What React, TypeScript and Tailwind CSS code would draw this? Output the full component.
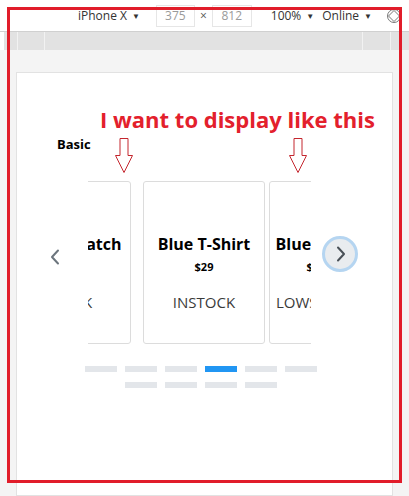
import React from "react";

const products = [
	{ name: "Bamboo Watch", price: "$65", status: "INSTOCK" },
	{ name: "Blue T-Shirt", price: "$29", status: "INSTOCK" },
	{ name: "Blue Band", price: "$79", status: "LOWSTOCK" },
];

const DownArrow = () => (
	<svg width="18" height="36" viewBox="0 0 18 36" className="shrink-0">
		<path d="M5 0.5 H13 V17.5 H17.5 L9 34.5 L0.5 17.5 H5 Z" fill="white" stroke="#c4262e" strokeWidth="1" />
	</svg>
);

const Chevron = ({ dir, color }: { dir: "left" | "right"; color: string }) => (
	<svg width="12" height="16" viewBox="0 0 12 16">
		<path
			d={dir === "left" ? "M9 1.5 L3 8 L9 14.5" : "M3 1.5 L9 8 L3 14.5"}
			fill="none"
			stroke={color}
			strokeWidth="2"
			strokeLinecap="round"
			strokeLinejoin="round"
		/>
	</svg>
);

const App = () => {
	return (
		<div className="relative w-[409px] h-[496px] overflow-hidden bg-white font-['Open_Sans',sans-serif] flex flex-col">
			{/* devtools toolbar */}
			<div className="h-8 shrink-0 flex items-center border-b border-[#d0d0d0] text-[12px] text-[#333] whitespace-nowrap">
				<span className="ml-[78px] shrink-0 flex items-center gap-[5px]">
					iPhone X <span className="text-[8px]">▼</span>
				</span>
				<span className="ml-[16px] shrink-0 w-[39px] h-[22px] border border-[#e6e6e6] flex items-center justify-center text-[#9a9a9a]">
					375
				</span>
				<span className="mx-[5px] shrink-0 text-[#555]">×</span>
				<span className="w-[40px] shrink-0 h-[22px] border border-[#e6e6e6] flex items-center justify-center text-[#9a9a9a]">
					812
				</span>
				<span className="ml-[19px] shrink-0 flex items-center gap-[5px]">
					100% <span className="text-[8px]">▼</span>
				</span>
				<span className="ml-[8px] shrink-0 flex items-center gap-[5px]">
					Online <span className="text-[8px]">▼</span>
				</span>
				<svg width="16" height="16" viewBox="0 0 16 16" className="ml-[14px] shrink-0">
					<circle cx="8" cy="8" r="6.5" fill="none" stroke="#777" strokeWidth="1" />
					<path d="M8 2.5 L13.5 8 L8 13.5 L2.5 8 Z" fill="none" stroke="#777" strokeWidth="1" />
				</svg>
			</div>

			{/* ruler */}
			<div className="h-[18px] shrink-0 ml-1 bg-[#e2e2e2] flex">
				<div className="ml-[13px] w-px bg-[#f2f2f2]" />
				<div className="ml-[26px] w-px bg-[#f2f2f2]" />
				<div className="ml-[317px] w-px bg-[#f2f2f2]" />
				<div className="ml-[27px] w-px bg-[#f2f2f2]" />
			</div>

			{/* viewport */}
			<div className="flex-1 bg-[#f4f4f4] pt-[22px] pl-4 pr-[16px]">
				<div className="h-full bg-white border border-[#e2e2e2] pt-[33px]">
					<h1 className="ml-[83px] text-[22px] leading-[27px] font-bold text-[#e3202c] whitespace-nowrap">
						I want to display like this
					</h1>

					<div className="mt-[2px] flex items-start">
						<span className="ml-[40px] w-[58px] text-[13px] leading-[18px] font-bold text-black">Basic</span>
						<div className="mt-[3px]">
							<DownArrow />
						</div>
						<div className="ml-[156px] mt-[3px]">
							<DownArrow />
						</div>
					</div>

					{/* carousel */}
					<div className="mt-[7px] flex items-start">
						<button className="ml-[21px] mt-[60px] w-[34px] h-8 flex items-center justify-center">
							<Chevron dir="left" color="#6c757d" />
						</button>
						<div className="ml-4 w-[223px] overflow-hidden">
							<div className="flex -ml-[91px]">
								{products.map((p, i) => (
									<div
										key={p.name}
										className={
											i === 0
												? "shrink-0 w-[134px] h-[163px] border border-[#dcdcdc] rounded-[3px] flex flex-col items-center pt-[51px] pr-[6px]"
												: i === 1
													? "shrink-0 ml-3 w-[122px] h-[163px] border border-[#dcdcdc] rounded-[3px] flex flex-col items-center pt-[51px]"
													: "shrink-0 ml-[4px] w-[122px] h-[163px] border border-[#dcdcdc] rounded-[3px] flex flex-col items-center pt-[51px] pr-[28px]"
										}
									>
										<span className="text-[16px] leading-[22px] font-bold text-black whitespace-nowrap">{p.name}</span>
										<span className="mt-[4px] text-[11px] leading-[15px] font-bold text-black">{p.price}</span>
										<span className="mt-[17px] text-[15px] leading-[22px] text-[#3a3a3a] whitespace-nowrap">{p.status}</span>
									</div>
								))}
							</div>
						</div>
						<button className="ml-[11px] mt-[55px] w-9 h-9 rounded-full bg-[#e9ecef] border-[3px] border-[#b5d5f1] flex items-center justify-center pl-[2px]">
							<Chevron dir="right" color="#495057" />
						</button>
					</div>

					{/* indicators */}
					<div className="mt-[22px] ml-[68px] w-[232px] flex flex-wrap justify-center gap-x-2 gap-y-[10px]">
						{Array.from({ length: 10 }).map((_, i) => (
							<span key={i} className={i === 3 ? "w-8 h-[6px] bg-[#2196f3]" : "w-8 h-[6px] bg-[#e3e6ea]"} />
						))}
					</div>
				</div>
			</div>

			{/* red annotation frame */}
			<div className="absolute left-[7px] top-[7px] w-[395px] h-[476px] border-[3px] border-[#e11d2a] pointer-events-none" />
		</div>
	);
};

export default App;
